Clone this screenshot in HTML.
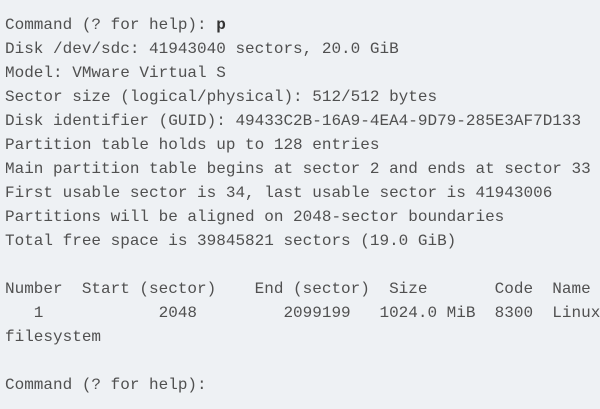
<!DOCTYPE html>
<html><head><meta charset="utf-8"><style>
html,body{margin:0;padding:0;}
body{width:600px;height:409px;background:#eef1f4;overflow:hidden;}
pre{margin:0;padding:13px 0 0 5px;font-family:"Liberation Mono",monospace;font-size:16px;line-height:24px;color:#505050;white-space:pre;}
b{color:#333;}
</style></head><body><pre>Command (? for help): <b>p</b>
Disk /dev/sdc: 41943040 sectors, 20.0 GiB
Model: VMware Virtual S
Sector size (logical/physical): 512/512 bytes
Disk identifier (GUID): 49433C2B-16A9-4EA4-9D79-285E3AF7D133
Partition table holds up to 128 entries
Main partition table begins at sector 2 and ends at sector 33
First usable sector is 34, last usable sector is 41943006
Partitions will be aligned on 2048-sector boundaries
Total free space is 39845821 sectors (19.0 GiB)

Number  Start (sector)    End (sector)  Size       Code  Name
   1            2048         2099199   1024.0 MiB  8300  Linux
filesystem

Command (? for help): </pre></body></html>
